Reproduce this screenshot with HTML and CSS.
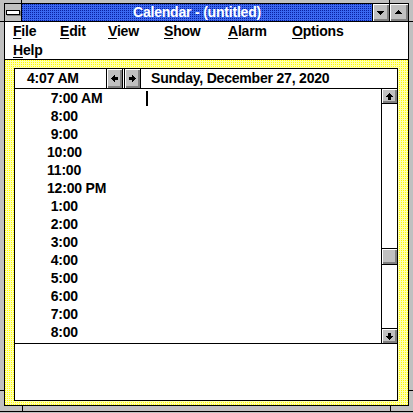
FILE: index.html
```html
<!DOCTYPE html>
<html>
<head>
<meta charset="utf-8">
<title>Calendar</title>
<link rel="stylesheet" href="styles.css">
</head>
<body>
<div class="window">
  <div class="frame">
    <div class="titlebar">
      <div class="sysbox"><span class="sysbar"></span></div>
      <div class="title">Calendar - (untitled)</div>
      <div class="tbtn min"><svg width="7" height="4" viewBox="0 0 7 4" shape-rendering="crispEdges"><path d="M0 0h7v1h-7z M1 1h5v1h-5z M2 2h3v1h-3z M3 3h1v1h-1z" fill="#000"/></svg></div>
      <div class="tbtn max"><svg width="7" height="4" viewBox="0 0 7 4" shape-rendering="crispEdges"><path d="M3 0h1v1h-1z M2 1h3v1h-3z M1 2h5v1h-5z M0 3h7v1h-7z" fill="#000"/></svg></div>
    </div>
    <div class="menubar">
      <div class="menurow">
        <span class="mi mi-file"><u>F</u>ile</span>
        <span class="mi mi-edit"><u>E</u>dit</span>
        <span class="mi mi-view"><u>V</u>iew</span>
        <span class="mi mi-show"><u>S</u>how</span>
        <span class="mi mi-alarm"><u>A</u>larm</span>
        <span class="mi"><u>O</u>ptions</span>
      </div>
      <div class="menurow">
        <span class="mi"><u>H</u>elp</span>
      </div>
    </div>
    <div class="client">
      <div class="panel">
        <div class="toprow">
          <div class="clock">4:07 AM</div>
          <div class="arrows">
            <div class="abtn"><svg width="7" height="7" viewBox="0 0 7 7" shape-rendering="crispEdges"><path d="M0 3h1v1h-1z M1 2h1v3h-1z M2 1h1v5h-1z M3 0h1v7h-1z M4 2h3v3h-3z" fill="#000"/></svg></div>
            <div class="abtn"><svg width="7" height="7" viewBox="0 0 7 7" shape-rendering="crispEdges"><path d="M6 3h1v1h-1z M5 2h1v3h-1z M4 1h1v5h-1z M3 0h1v7h-1z M0 2h3v3h-3z" fill="#000"/></svg></div>
          </div>
          <div class="date">Sunday, December 27, 2020</div>
        </div>
        <div class="middle">
          <div class="list">
            <div class="row"><span class="time"> 7:00 AM</span><span class="appt"><span class="caret"></span></span></div>
            <div class="row"><span class="time"> 8:00</span><span class="appt"></span></div>
            <div class="row"><span class="time"> 9:00</span><span class="appt"></span></div>
            <div class="row"><span class="time">10:00</span><span class="appt"></span></div>
            <div class="row"><span class="time">11:00</span><span class="appt"></span></div>
            <div class="row"><span class="time">12:00 PM</span><span class="appt"></span></div>
            <div class="row"><span class="time"> 1:00</span><span class="appt"></span></div>
            <div class="row"><span class="time"> 2:00</span><span class="appt"></span></div>
            <div class="row"><span class="time"> 3:00</span><span class="appt"></span></div>
            <div class="row"><span class="time"> 4:00</span><span class="appt"></span></div>
            <div class="row"><span class="time"> 5:00</span><span class="appt"></span></div>
            <div class="row"><span class="time"> 6:00</span><span class="appt"></span></div>
            <div class="row"><span class="time"> 7:00</span><span class="appt"></span></div>
            <div class="row"><span class="time"> 8:00</span><span class="appt"></span></div>
          </div>
          <div class="scrollbar">
            <div class="sb-btn sb-up"><svg width="7" height="7" viewBox="0 0 7 7" shape-rendering="crispEdges"><path d="M3 0h1v1h-1z M2 1h3v1h-3z M1 2h5v1h-5z M0 3h7v1h-7z M2 4h3v3h-3z" fill="#000"/></svg></div>
            <div class="track"><div class="thumb"></div></div>
            <div class="sb-btn sb-down"><svg width="7" height="7" viewBox="0 0 7 7" shape-rendering="crispEdges"><path d="M2 0h3v3h-3z M0 3h7v1h-7z M1 4h5v1h-5z M2 5h3v1h-3z M3 6h1v1h-1z" fill="#000"/></svg></div>
          </div>
        </div>
        <div class="notes"></div>
      </div>
    </div>
  </div>
  <span class="mark mk-t1"></span>
  <span class="mark mk-t2"></span>
  <span class="mark mk-l1"></span>
  <span class="mark mk-r1"></span>
  <span class="mark mk-l2"></span>
  <span class="mark mk-r2"></span>
  <span class="mark mk-b1"></span>
  <span class="mark mk-b2"></span>
  <span class="mark mk-bottom"></span>
</div>
</body>
</html>
```

FILE: styles.css
```css
html, body {
  margin: 0;
  padding: 0;
  background: #c0c0c0;
}

body {
  font-family: "Liberation Sans", Arial, sans-serif;
  font-weight: bold;
  font-size: 14px;
  letter-spacing: -0.2px;
  color: #000;
}

.window {
  position: relative;
  width: 413px;
  height: 413px;
  box-sizing: border-box;
  padding: 3px 4px 7px 4px;
  background: #c0c0c0;
  overflow: hidden;
}

.frame {
  height: 100%;
  box-sizing: border-box;
  border: 1px solid #000;
  display: flex;
  flex-direction: column;
}

/* Title bar */
.titlebar {
  flex: none;
  height: 17px;
  border-bottom: 1px solid #000;
  display: flex;
}

.sysbox {
  width: 16px;
  border-right: 1px solid #000;
  background: #c0c0c0;
  display: flex;
  align-items: center;
  justify-content: center;
}

.sysbar {
  display: block;
  width: 12px;
  height: 3px;
  background: #fff;
  border: 1px solid #000;
  box-shadow: 1px 1px 0 #808080;
  margin-left: -1px;
}

.title {
  flex: 1;
  color: #fff;
  text-align: center;
  line-height: 17px;
  white-space: nowrap;
  background-color: #2f5ce6;
  background-image:
    repeating-linear-gradient(to bottom, transparent 0 1px, #3a68f0 1px 2px),
    repeating-linear-gradient(to right, #0a20a0 0 1px, #3a68f0 1px 2px);
}

.tbtn {
  border-left: 1px solid #000;
  background: #c0c0c0;
  box-shadow: inset 1px 1px 0 #fff, inset -2px -2px 0 #808080;
  display: flex;
  align-items: center;
  justify-content: center;
}

.tbtn.min { width: 16px; }
.tbtn.max { width: 18px; }
.tbtn svg { display: block; }
.tbtn.min svg { margin: 1px 1px 0 0; }
.tbtn.max svg { margin: -1px 1px 0 0; }

/* Menu bar */
.menubar {
  flex: none;
  height: 37px;
  border-bottom: 1px solid #000;
  background: #fff;
  padding-left: 8px;
  overflow: hidden;
}

.menurow {
  display: flex;
  height: 19px;
  line-height: 19px;
}

.mi {
  white-space: nowrap;
}

.mi u {
  text-decoration-thickness: 1px;
  text-underline-offset: 2px;
}

.mi-file { width: 47px; }
.mi-edit { width: 48px; }
.mi-view { width: 56px; }
.mi-show { width: 64px; }
.mi-alarm { width: 64px; }

/* Client area */
.client {
  flex: 1;
  min-height: 0;
  padding: 8px 10px 4px 9px;
  display: flex;
  flex-direction: column;
  background-color: #ffff90;
  background-image:
    repeating-linear-gradient(to bottom, transparent 0 1px, #ffffb0 1px 2px),
    repeating-linear-gradient(to right, #ffff00 0 1px, #ffffb0 1px 2px);
}

.panel {
  flex: 1;
  min-height: 0;
  border: 1px solid #000;
  background: #fff;
  display: flex;
  flex-direction: column;
}

.toprow {
  flex: none;
  height: 19px;
  line-height: 19px;
  border-bottom: 1px solid #000;
  display: flex;
}

.clock {
  width: 91px;
  box-sizing: border-box;
  padding-left: 12px;
  white-space: nowrap;
}

.arrows {
  display: flex;
  gap: 1px;
}

.abtn {
  width: 15px;
  border-left: 1px solid #000;
  border-right: 1px solid #000;
  background: #c0c0c0;
  box-shadow: inset 1px 1px 0 #fff, inset -2px -2px 0 #808080;
  display: flex;
  align-items: center;
  justify-content: center;
}

.abtn svg { display: block; margin: -1px 1px 0 0; }

.date {
  padding-left: 10px;
  white-space: nowrap;
}

.middle {
  flex: none;
  height: 254px;
  border-bottom: 1px solid #000;
  display: flex;
}

.list {
  flex: 1;
  overflow: hidden;
}

.row {
  display: grid;
  grid-template-columns: 131px 1fr;
  height: 18px;
  line-height: 18px;
}

.time {
  padding-left: 32px;
  white-space: pre;
}

.appt {
  display: flex;
  align-items: center;
}

.caret {
  display: block;
  width: 2px;
  height: 15px;
  background: #000;
}

.scrollbar {
  width: 15px;
  border-left: 1px solid #000;
  display: flex;
  flex-direction: column;
}

.sb-btn {
  flex: none;
  height: 14px;
  background: #c0c0c0;
  box-shadow: inset 1px 1px 0 #fff, inset -2px -2px 0 #808080;
  display: flex;
  align-items: center;
  justify-content: center;
}

.sb-btn svg { display: block; margin: 0 1px 0 0; }

.sb-up { border-bottom: 1px solid #000; }
.sb-down { border-top: 1px solid #000; }

.track {
  flex: 1;
  background: #fff;
}

.thumb {
  margin-top: 144px;
  height: 15px;
  border-top: 1px solid #000;
  border-bottom: 1px solid #000;
  background: #c0c0c0;
  box-shadow: inset 1px 1px 0 #fff, inset -2px -2px 0 #808080;
}

.notes {
  flex: 1;
  background: #fff;
}

/* Sizing-frame corner marks */
.mark {
  position: absolute;
  background: #000;
  display: block;
}

.mk-t1 { left: 21px; top: 0; width: 1px; height: 3px; }
.mk-t2 { left: 389px; top: 0; width: 1px; height: 3px; }
.mk-l1 { left: 0; top: 21px; width: 4px; height: 1px; }
.mk-r1 { left: 409px; top: 21px; width: 4px; height: 1px; }
.mk-l2 { left: 0; top: 390px; width: 4px; height: 1px; }
.mk-r2 { left: 409px; top: 390px; width: 4px; height: 1px; }
.mk-b1 { left: 22px; top: 406px; width: 1px; height: 5px; }
.mk-b2 { left: 390px; top: 406px; width: 1px; height: 5px; }
.mk-bottom { left: 0; top: 411px; width: 413px; height: 1px; }
```
